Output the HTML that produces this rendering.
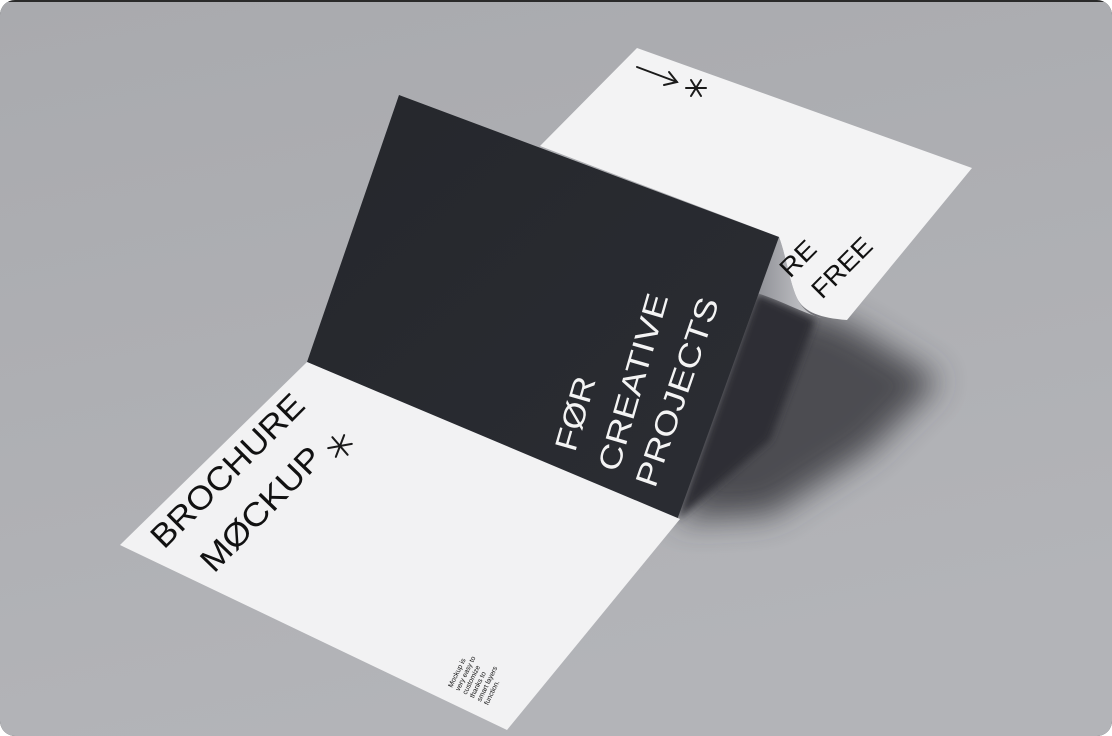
<!DOCTYPE html>
<html><head><meta charset="utf-8"><style>
html,body{margin:0;padding:0;width:1112px;height:736px;overflow:hidden;background:#fff}
.f{position:absolute;left:0;top:0;width:1112px;height:736px;border-radius:15px;overflow:hidden;background:#2a2a2a}
svg{display:block}
text{font-family:"Liberation Sans",sans-serif}
</style></head><body>
<div class="f">
<svg width="1112" height="736" viewBox="0 0 1112 736">
<defs>
<linearGradient id="bg" x1="0" y1="0" x2="0.3" y2="1">
<stop offset="0" stop-color="#a9aaae"/><stop offset="1" stop-color="#b3b4b8"/>
</linearGradient>
<filter id="bl" x="-30%" y="-30%" width="160%" height="160%"><feGaussianBlur stdDeviation="16"/></filter>
<filter id="bl2"><feGaussianBlur stdDeviation="4"/></filter>
<linearGradient id="dk" x1="0" y1="0" x2="1" y2="1">
<stop offset="0" stop-color="#25272c"/><stop offset="1" stop-color="#2b2d33"/>
</linearGradient>
<linearGradient id="curl" x1="0" y1="0" x2="1" y2="0">
<stop offset="0" stop-color="#8f9096"/><stop offset="1" stop-color="#d0d1d4"/>
</linearGradient>
</defs>
<rect x="0" y="2" width="1112" height="734" fill="url(#bg)"/>
<!-- shadow -->
<polygon points="677,520 760,292 850,325 940,380 870,450 770,515" fill="#3a3b40" filter="url(#bl)" opacity="0.85"/>
<polygon points="677,520 757,293 815,320 770,440" fill="#2e2f34" filter="url(#bl2)"/>
<!-- back panel -->
<path d="M637,48 L972,168 L847,320 C820,318 805,312 798,300 C790,285 786,255 779,237 L540,146 Z" fill="#f3f3f4"/>
<!-- curl underside -->
<path d="M779,237 C786,255 790,285 798,300 C803,310 812,316 822,318 C800,312 780,300 757,293 Z" fill="url(#curl)"/>
<!-- dark panel -->
<polygon points="399,95 779,237 677,520 307,362" fill="url(#dk)"/>
<!-- bottom white panel -->
<polygon points="307,362 680,519 507,730 120,545" fill="#f2f2f3"/>
<!-- arrow & asterisk top -->
<g stroke="#1a1a1a" stroke-width="2" fill="none" stroke-linecap="round">
<line x1="637" y1="67" x2="677" y2="82"/>
<polyline points="669,72 677,82 664,85"/>
<g transform="translate(696,88)">
<line x1="-10" y1="0" x2="10" y2="0"/><line x1="-5" y1="-8" x2="5" y2="8"/><line x1="5" y1="-8" x2="-5" y2="8"/>
</g>
<g transform="translate(340,446) rotate(-10)">
<line x1="-12" y1="0" x2="12" y2="0"/><line x1="-6" y1="-10" x2="6" y2="10"/><line x1="6" y1="-10" x2="-6" y2="10"/>
</g>
</g>
<!-- texts -->
<g fill="#111">
<text x="164" y="550" font-size="33" textLength="202" lengthAdjust="spacingAndGlyphs" transform="rotate(-45 164 550)">BROCHURE</text>
<text x="214" y="574" font-size="33" textLength="159" lengthAdjust="spacingAndGlyphs" transform="rotate(-46 214 574)">MØCKUP</text>
<text x="822" y="300" font-size="26" textLength="74" lengthAdjust="spacingAndGlyphs" transform="rotate(-45 822 300)">FREE</text>
<text x="790" y="279" font-size="26" textLength="40" lengthAdjust="spacingAndGlyphs" transform="rotate(-45 790 279)">RE</text>
<g font-size="7" transform="rotate(-64 452 688)">
<text x="452" y="688">Mockup is</text>
<text x="452" y="696">very easy to</text>
<text x="452" y="704">customize</text>
<text x="452" y="712">thanks to</text>
<text x="452" y="720">smart layers</text>
<text x="452" y="728">function.</text>
</g>
</g>
<g fill="#f4f4f4">
<text x="575" y="453" font-size="31" textLength="76" lengthAdjust="spacingAndGlyphs" transform="rotate(-74 575 453)">FØR</text>
<text x="618" y="473" font-size="31" textLength="183" lengthAdjust="spacingAndGlyphs" transform="rotate(-74 618 473)">CREATIVE</text>
<text x="655" y="489" font-size="31" textLength="198" lengthAdjust="spacingAndGlyphs" transform="rotate(-71 655 489)">PROJECTS</text>
</g>
</svg>
</div>
</body></html>
